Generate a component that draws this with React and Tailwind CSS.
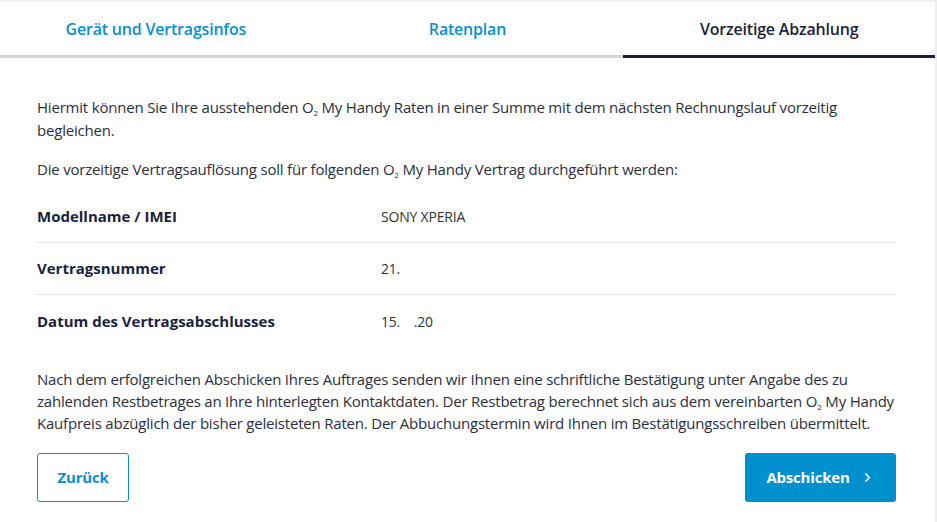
import React from 'react';
import { ChevronRight } from 'lucide-react';

const O2 = () => (
  <span>
    O<span className="inline-block text-[8px] leading-none align-[-3px]">2</span>
  </span>
);

const tabs = [
  { label: 'Gerät und Vertragsinfos', active: false },
  { label: 'Ratenplan', active: false },
  { label: 'Vorzeitige Abzahlung', active: true },
];

const rows = [
  { label: 'Modellname / IMEI', value: 'SONY XPERIA' },
  { label: 'Vertragsnummer', value: '21.' },
  { label: 'Datum des Vertragsabschlusses', value: '15.    .20' },
];

const App = () => {
  return (
    <div className="w-[937px] h-[522px] bg-white overflow-hidden" style={{ fontFamily: '"Open Sans", "Noto Sans", sans-serif' }}>
      <div className="flex h-full border-t-2 border-[#f1f1f3]">
        <div className="w-[935px] flex flex-col">
          <div className="flex">
            {tabs.map((t) => (
              <div
                key={t.label}
                className={`flex-1 h-[56px] flex items-center justify-center text-[16px] font-semibold tracking-[-0.2px] border-b-[3px] ${
                  t.active ? 'text-[#1b1f3e] border-[#1b1f3e]' : 'text-[#0a8fcd] border-[#d6d6da]'
                }`}
              >
                {t.label}
              </div>
            ))}
          </div>

          <div className="px-[37px] pt-[38px] text-[15px] tracking-[-0.2px] text-[#2c2e3e]">
            <p className="leading-[23px]">
              Hiermit können Sie Ihre ausstehenden <O2 /> My Handy Raten in einer Summe mit dem nächsten Rechnungslauf vorzeitig
              <br />
              begleichen.
            </p>
            <p className="leading-[23px] mt-[16px]">
              Die vorzeitige Vertragsauflösung soll für folgenden <O2 /> My Handy Vertrag durchgeführt werden:
            </p>

            <div className="mt-[10px] mr-[2px]">
              {rows.map((r, i) => (
                <div
                  key={r.label}
                  className={`flex items-center h-[52px] ${i < rows.length - 1 ? 'border-b border-[#e3e3e6]' : ''}`}
                >
                  <div className="w-[344px] font-bold tracking-normal text-[#1b1f3e]">{r.label}</div>
                  <div className="text-[14px] text-[#333] whitespace-pre">{r.value}</div>
                </div>
              ))}
            </div>

            <p className="leading-[22px] mt-[21px] whitespace-nowrap">
              Nach dem erfolgreichen Abschicken Ihres Auftrages senden wir Ihnen eine schriftliche Bestätigung unter Angabe des zu
              <br />
              zahlenden Restbetrages an Ihre hinterlegten Kontaktdaten. Der Restbetrag berechnet sich aus dem vereinbarten <O2 /> My Handy
              <br />
              Kaufpreis abzüglich der bisher geleisteten Raten. Der Abbuchungstermin wird Ihnen im Bestätigungsschreiben übermittelt.
            </p>

            <div className="flex justify-between mt-[19px] mr-[2px]">
              <button className="w-[92px] h-[49px] border border-[#0a8fcd] rounded-[3px] text-[#0a8fcd] font-bold text-[15px]">
                Zurück
              </button>
              <button className="w-[151px] h-[49px] bg-[#0090d0] rounded-[3px] text-white font-bold text-[15px] flex items-center justify-center gap-[10px]">
                Abschicken
                <ChevronRight size={15} strokeWidth={2.5} />
              </button>
            </div>
          </div>
        </div>
        <div className="w-[2px] bg-[#efeff1]" />
      </div>
    </div>
  );
};

export default App;
